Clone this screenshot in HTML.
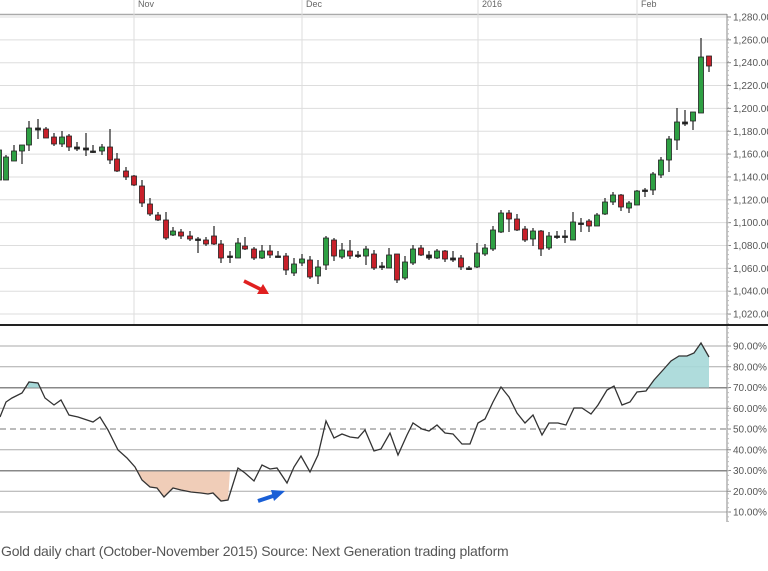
<!DOCTYPE html>
<html><head><meta charset="utf-8"><style>
html,body{margin:0;padding:0;background:#fff;width:768px;height:571px;overflow:hidden}
svg{position:absolute;left:0;top:0}
text{font-family:"Liberation Sans",sans-serif;}
.cap{position:absolute;left:1px;top:543px;font-family:"Liberation Sans",sans-serif;font-size:14px;color:#555;letter-spacing:-0.2px}
</style></head><body>
<svg id="s" width="768" height="571" xmlns="http://www.w3.org/2000/svg"></svg>
<div class="cap">Gold daily chart (October-November 2015) Source: Next Generation trading platform</div>
<script>
var s='';
// top line
s+='<line x1="0" y1="14.5" x2="727" y2="14.5" stroke="#aaa" stroke-width="1.5"/>';
// price grid
for(var i=0;i<14;i++){var y=17+i*22.85;s+='<line x1="0" y1="'+y+'" x2="727" y2="'+y+'" stroke="#ddd" stroke-width="1"/>';
var p=1280-i*20;s+='<line x1="727" y1="'+y+'" x2="731" y2="'+y+'" stroke="#888"/>';
s+='<text x="733" y="'+(y+3.5)+'" font-size="10" fill="#555">'+(p>=1000?'1,'+String(p-1000).padStart(3,'0'):p)+'.00</text>';}
// vertical grid
[134,302,478,637].forEach(function(x){s+='<line x1="'+x+'" y1="0" x2="'+x+'" y2="325" stroke="#ddd"/>';});
s+='<text x="138" y="7" font-size="9" fill="#666">Nov</text><text x="306" y="7" font-size="9" fill="#666">Dec</text><text x="482" y="7" font-size="9" fill="#666">2016</text><text x="641" y="7" font-size="9" fill="#666">Feb</text>';
// lower grid
for(var v=90;v>=10;v-=10){var y=346+(90-v)*2.075;
 if(v==50) s+='<line x1="0" y1="'+y+'" x2="727" y2="'+y+'" stroke="#777" stroke-dasharray="6,4"/>';
 else s+='<line x1="0" y1="'+y+'" x2="727" y2="'+y+'" stroke="'+((v==70||v==30)?'#888':'#aaa')+'"/>';
 s+='<line x1="727" y1="'+y+'" x2="731" y2="'+y+'" stroke="#888"/><text x="733" y="'+(y+3.5)+'" font-size="10" fill="#555">'+v+'.00%</text>';}
// axis
s+='<line x1="727" y1="14" x2="727" y2="522" stroke="#888"/>';
for(var y=20;y<522;y+=4.6){s+='<line x1="727" y1="'+y+'" x2="729" y2="'+y+'" stroke="#bbb"/>';}
s+='<line x1="0" y1="325" x2="768" y2="325" stroke="#222" stroke-width="2"/>';
// candles [x,hi,lo,top,bot,c]
var C=[[-1,148,180,150,180,'g'],[6,155,180,157,180,'g'],[14,145,161,151,161,'g'],[22,145,164,145,151,'g'],[29,121,151,128,145,'g'],[38,119,139,128,130,'d'],[46,127,138,129,138,'r'],[54,133,146,137,144,'r'],[62,131,147,137,144,'g'],[69,134,151,136,147,'r'],[77,142,151,147,149,'d'],[86,133,156,148,150,'d'],[93,145,153,151,152,'d'],[102,144,155,147,151,'g'],[110,129,164,147,160,'r'],[117,153,172,159,171,'r'],[126,167,180,171,177,'r'],[134,175,186,176,185,'r'],[142,180,207,186,203,'r'],[150,198,216,204,214,'r'],[158,212,221,215,220,'r'],[166,212,240,220,238,'r'],[173,227,236,231,235,'g'],[181,229,239,232,236,'r'],[190,231,241,236,239,'r'],[198,237,253,239,240,'d'],[206,237,246,240,244,'r'],[214,226,245,236,244,'r'],[221,240,263,244,258,'r'],[230,251,263,256,257,'d'],[238,238,258,243,258,'g'],[245,237,250,246,249,'r'],[254,247,260,249,258,'r'],[262,245,259,251,258,'g'],[270,245,258,251,255,'r'],[278,251,257,256,257,'d'],[286,253,275,256,270,'r'],[294,258,276,264,273,'g'],[302,254,266,259,263,'g'],[310,256,279,260,277,'r'],[318,260,284,267,276,'g'],[326,236,270,238,265,'g'],[334,238,261,240,256,'r'],[342,243,259,250,257,'g'],[350,240,259,251,256,'r'],[358,251,258,255,256,'d'],[366,246,265,249,256,'g'],[374,250,270,254,268,'r'],[382,262,270,266,267,'d'],[389,248,268,255,268,'g'],[397,254,283,254,280,'r'],[405,256,280,262,278,'g'],[413,245,265,249,263,'g'],[421,245,256,248,255,'r'],[429,251,260,255,258,'d'],[437,249,259,251,258,'g'],[445,250,262,251,259,'r'],[453,251,262,258,260,'d'],[461,255,270,258,267,'r'],[469,266,270,268,269,'d'],[477,243,268,253,267,'g'],[485,244,256,248,254,'g'],[493,226,251,230,249,'g'],[501,210,233,213,232,'g'],[509,210,232,213,219,'r'],[517,214,231,219,230,'r'],[525,226,242,229,240,'r'],[533,228,246,231,239,'g'],[541,230,256,231,249,'r'],[549,232,250,236,248,'g'],[557,231,239,236,237,'d'],[565,230,243,236,237,'d'],[573,212,240,222,240,'g'],[581,218,232,223,224,'d'],[589,219,232,221,226,'r'],[597,213,226,215,226,'g'],[605,198,215,202,214,'g'],[613,192,205,195,202,'g'],[621,194,211,195,207,'r'],[629,201,213,203,208,'g'],[637,190,205,191,205,'g'],[645,188,197,190,191,'d'],[653,172,195,174,190,'g'],[661,157,178,160,175,'g'],[669,136,172,139,160,'g'],[677,108,150,122,140,'g'],[685,110,126,122,124,'d'],[693,112,130,112,121,'g'],[701,38,113,57,113,'g'],[709,56,72,56,66,'r']];
C.forEach(function(c){var x=c[0];s+='<line x1="'+x+'" y1="'+c[1]+'" x2="'+x+'" y2="'+c[2]+'" stroke="#222" stroke-width="1.2"/>';
var h=Math.max(c[4]-c[3],1.5);var f=c[5]=='g'?'#2ea043':c[5]=='r'?'#c8202a':'#222';
s+='<rect x="'+(x-2.5)+'" y="'+c[3]+'" width="5" height="'+h+'" fill="'+f+'" stroke="#222" stroke-width="0.8"/>';});
// rsi
var P=[[0,417],[6,402],[12,398],[22,393],[29,382],[38,383],[45,398],[54,405],[61,400],[69,415],[78,417],[93,422],[100,417],[108,430],[118,450],[127,458],[135,467],[142,480],[150,487],[157,488],[164,497],[173,488],[181,490],[191,492],[201,493],[208,494],[213,493],[221,501],[228,500],[238,468],[245,473],[254,481],[262,465],[270,469],[277,468],[287,483],[294,467],[301,456],[310,472],[318,455],[326,421],[334,438],[342,434],[350,437],[358,438],[365,430],[374,451],[381,449],[390,433],[398,455],[407,435],[413,423],[422,429],[429,431],[437,425],[445,433],[453,434],[462,444],[470,444],[478,423],[485,419],[493,402],[501,387],[509,397],[517,413],[525,423],[533,415],[542,435],[549,423],[558,423],[566,425],[574,408],[582,408],[591,414],[598,405],[607,390],[614,386],[622,405],[630,402],[637,392],[646,391],[654,380],[663,370],[671,361],[679,356],[687,356],[694,353],[701,343],[709,357]];
function seg(a,b,cond){var r=P.filter(function(p){return p[0]>=a&&p[0]<=b;});return r;}
var g=seg(646,709);s+='<polygon points="646,388 '+g.map(function(p){return p.join(',')}).join(' ')+' 709,388" fill="#a6d8d8" opacity="0.9"/>';
s+='<polygon points="27,388 29,382 38,383 41,388" fill="#a6d8d8"/>';
var o=seg(135,228);s+='<polygon points="135,471 '+o.map(function(p){return p.join(',')}).join(' ')+' 230,471" fill="#f0cdb8"/>';
s+='<line x1="0" y1="388" x2="727" y2="388" stroke="#888"/><line x1="0" y1="471" x2="727" y2="471" stroke="#888"/>';
s+='<polyline points="'+P.map(function(p){return p.join(',')}).join(' ')+'" fill="none" stroke="#333" stroke-width="1.3"/>';
// arrows
s+='<line x1="244" y1="281" x2="262" y2="290" stroke="#e02020" stroke-width="3.5"/><polygon points="269,294 257,294 263,284" fill="#e02020"/>';
s+='<line x1="258" y1="501" x2="276" y2="495" stroke="#1a5fd6" stroke-width="4"/><polygon points="285,491 274,501 271,490" fill="#1a5fd6"/>';
document.getElementById('s').innerHTML=s;
</script>
</body></html>
